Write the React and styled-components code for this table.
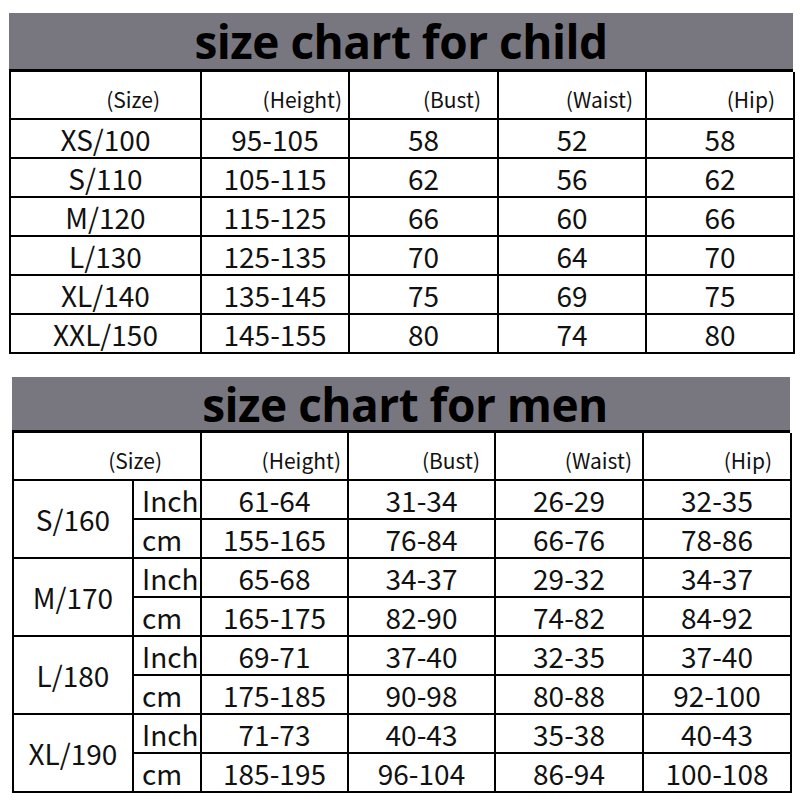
import styled, { createGlobalStyle } from "styled-components";

const GlobalStyle = createGlobalStyle`
  body {
    margin: 0;
    background: #ffffff;
  }
`;

const childRows = [
  ["XS/100", "95-105", "58", "52", "58"],
  ["S/110", "105-115", "62", "56", "62"],
  ["M/120", "115-125", "66", "60", "66"],
  ["L/130", "125-135", "70", "64", "70"],
  ["XL/140", "135-145", "75", "69", "75"],
  ["XXL/150", "145-155", "80", "74", "80"],
];

const menRows = [
  ["S/160", ["61-64", "31-34", "26-29", "32-35"], ["155-165", "76-84", "66-76", "78-86"]],
  ["M/170", ["65-68", "34-37", "29-32", "34-37"], ["165-175", "82-90", "74-82", "84-92"]],
  ["L/180", ["69-71", "37-40", "32-35", "37-40"], ["175-185", "90-98", "80-88", "92-100"]],
  ["XL/190", ["71-73", "40-43", "35-38", "40-43"], ["185-195", "96-104", "86-94", "100-108"]],
];

const Page = styled.div`
  width: 800px;
  height: 800px;
  padding-top: 13px;
  box-sizing: border-box;
  font-family: "Noto Sans CJK SC", "Noto Sans", sans-serif;
  color: #111;
  display: flex;
  flex-direction: column;
  gap: 23px;
`;

const Chart = styled.section`
  margin-left: ${(p) => p.$left}px;
  width: ${(p) => p.$width}px;
`;

const TitleBar = styled.div`
  height: ${(p) => p.$h}px;
  background: #78777f;
  border-bottom: 3px solid #000;
  display: flex;
  align-items: center;
  justify-content: center;
  font-family: "Open Sans", Lato, sans-serif;
  font-weight: 700;
  font-size: 46px;
  letter-spacing: -0.5px;
  color: #000;
  line-height: 1;
  padding-left: ${(p) => p.$shift || 0}px;
`;

const Table = styled.table`
  width: 100%;
  border-collapse: collapse;
  table-layout: fixed;
  border-left: 2px solid #000;
  border-right: 2px solid #000;
  border-bottom: 2px solid #000;
`;

const HeadCell = styled.td`
  height: 38px;
  border: 2px solid #000;
  border-top: none;
  text-align: right;
  vertical-align: bottom;
  padding: 0 ${(p) => p.$pad}px 8px 0;
  font-size: 21px;
  line-height: 1;
`;

const Cell = styled.td`
  height: 37px;
  border: 2px solid #000;
  padding: 0;
  text-align: ${(p) => (p.$left ? "left" : "center")};
  padding-left: ${(p) => (p.$left ? 8 : 0)}px;
  font-size: 28px;
  line-height: 1;
  white-space: nowrap;
`;

const ChildChart = () => (
  <Chart $left={9} $width={784}>
    <TitleBar $h={56}>size chart for child</TitleBar>
    <Table>
      <colgroup>
        <col style={{ width: 191 }} />
        <col style={{ width: 148 }} />
        <col style={{ width: 149 }} />
        <col style={{ width: 148 }} />
        <col style={{ width: 148 }} />
      </colgroup>
      <tbody>
        <tr>
          <HeadCell $pad={40}>(Size)</HeadCell>
          <HeadCell $pad={6}>(Height)</HeadCell>
          <HeadCell $pad={16}>(Bust)</HeadCell>
          <HeadCell $pad={12}>(Waist)</HeadCell>
          <HeadCell $pad={18}>(Hip)</HeadCell>
        </tr>
        {childRows.map((row) => (
          <tr key={row[0]}>
            {row.map((v, i) => (
              <Cell key={i}>{v}</Cell>
            ))}
          </tr>
        ))}
      </tbody>
    </Table>
  </Chart>
);

const MenChart = () => (
  <Chart $left={12} $width={778}>
    <TitleBar $h={53} $shift={8}>
      size chart for men
    </TitleBar>
    <Table>
      <colgroup>
        <col style={{ width: 120 }} />
        <col style={{ width: 68 }} />
        <col style={{ width: 147 }} />
        <col style={{ width: 147 }} />
        <col style={{ width: 148 }} />
        <col style={{ width: 148 }} />
      </colgroup>
      <tbody>
        <tr>
          <HeadCell colSpan={2} $pad={38}>
            (Size)
          </HeadCell>
          <HeadCell $pad={6}>(Height)</HeadCell>
          <HeadCell $pad={14}>(Bust)</HeadCell>
          <HeadCell $pad={10}>(Waist)</HeadCell>
          <HeadCell $pad={18}>(Hip)</HeadCell>
        </tr>
        {menRows.map(([size, inch, cm]) => [
          <tr key={size + "-in"}>
            <Cell rowSpan={2}>{size}</Cell>
            <Cell $left>Inch</Cell>
            {inch.map((v, i) => (
              <Cell key={i}>{v}</Cell>
            ))}
          </tr>,
          <tr key={size + "-cm"}>
            <Cell $left>cm</Cell>
            {cm.map((v, i) => (
              <Cell key={i}>{v}</Cell>
            ))}
          </tr>,
        ])}
      </tbody>
    </Table>
  </Chart>
);

export default function App() {
  return (
    <>
      <GlobalStyle />
      <Page>
        <ChildChart />
        <MenChart />
      </Page>
    </>
  );
}
